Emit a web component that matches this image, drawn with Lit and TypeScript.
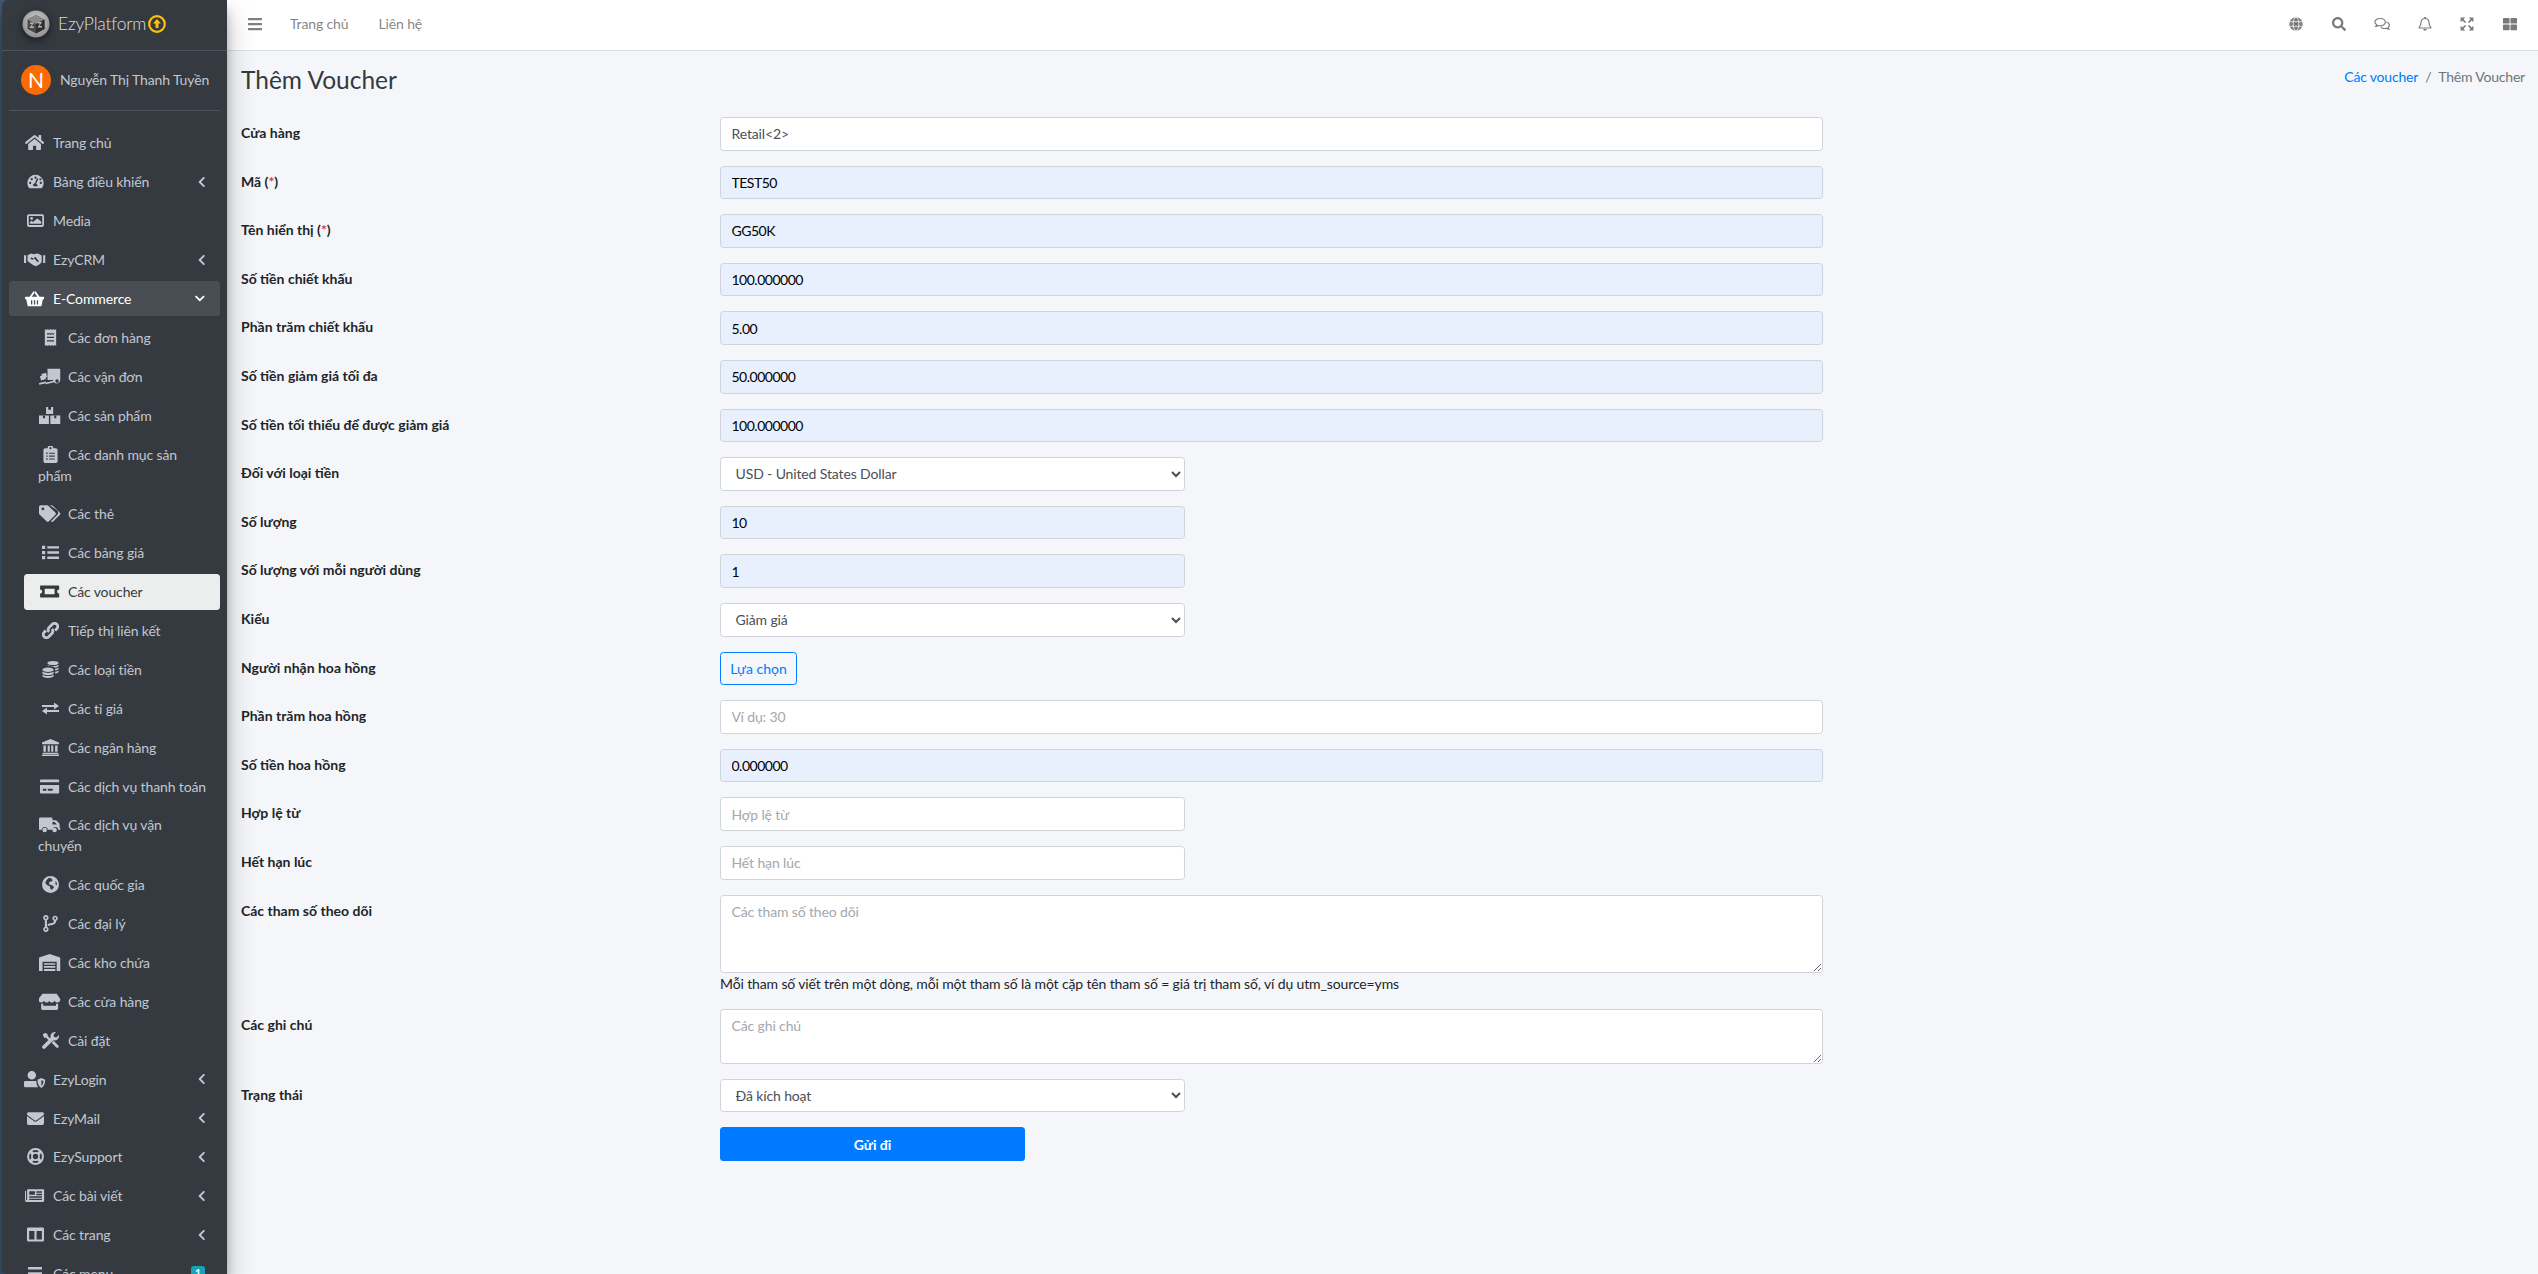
import { LitElement, html, svg, css, nothing } from 'lit';
import { customElement } from 'lit/decorators.js';

// icon table: [viewBox width, viewBox height, markup]
const ICONS: Record<string, [number, number, unknown]> = {
    home: [576, 512, svg`<path d="M280.37 148.26L96 300.11V464a16 16 0 0 0 16 16l112.06-.29a16 16 0 0 0 15.92-16V368a16 16 0 0 1 16-16h64a16 16 0 0 1 16 16v95.64a16 16 0 0 0 16 16.05L464 480a16 16 0 0 0 16-16V300L295.67 148.26a12.19 12.19 0 0 0-15.3 0zM571.6 251.47L488 182.56V44.05a12 12 0 0 0-12-12h-56a12 12 0 0 0-12 12v72.61L318.47 43a48 48 0 0 0-61 0L4.34 251.47a12 12 0 0 0-1.6 16.9l25.5 31A12 12 0 0 0 45.15 301l235.22-193.74a12.19 12.19 0 0 1 15.3 0L530.9 301a12 12 0 0 0 16.9-1.6l25.5-31a12 12 0 0 0-1.7-16.93z"/>`],
    gauge: [24, 24, svg`<path fill-rule="evenodd" d="M12 2.500A11.500 11.500 0 0 0 .5 14c0 2.600.9 5 2.300 6.900.4.500 1 .7 1.600.7h15.200c.6 0 1.200-.2 1.600-.7A11.400 11.400 0 0 0 23.500 14 11.500 11.500 0 0 0 12 2.500zM12 5a1.600 1.600 0 1 1 0 3.200A1.600 1.600 0 0 1 12 5zM4.500 15.600a1.600 1.600 0 1 1 0-3.200 1.600 1.600 0 0 1 0 3.200zm2.200-5.300a1.600 1.600 0 1 1 0-3.200 1.600 1.600 0 0 1 0 3.200zm8.100 8.300h-5.600a3 3 0 0 1 1.900-4.300l2.800-6.400a1 1 0 0 1 1.800.8l-2.700 6.300a3 3 0 0 1 1.800 3.600zm2.500-9.700a1.600 1.600 0 1 1 3.200 0 1.600 1.600 0 0 1-3.200 0zm2.200 6.700a1.600 1.600 0 1 1 0-3.200 1.600 1.600 0 0 1 0 3.200z"/>`],
    image: [24, 24, svg`<path fill-rule="evenodd" d="M2.500 3h19A2.500 2.500 0 0 1 24 5.500v13a2.500 2.500 0 0 1-2.500 2.500h-19A2.500 2.500 0 0 1 0 18.500v-13A2.500 2.500 0 0 1 2.500 3zM2.500 5.500v13h19v-13zM6.500 7a2 2 0 1 1 0 4 2 2 0 0 1 0-4zM4 16.500v-2l2.500-2 2 1.500 6-5 5.500 4.500v3z"/>`],
    handshake: [30, 24, svg`<path fill-rule="evenodd" d="M0 6h3v11H0zM27 6h3v11h-3zM5 6l5-2.500 4 1 2-.5 3.500-.5L25 6.500V16l-3.500 3-4.500 2.500-3-1-4-2.500L5 14zM10 9l3.500 1.500L16 8l5 6.500-1.500 1.500-5-5.500-2.500 2-3-1.500z"/>`],
    basket: [27, 24, svg`<path fill-rule="evenodd" d="M26 9.500h-5.400L15.200 2.100a1.300 1.300 0 0 0-2.100 1.500L17.400 9.500H9.600l4.300-5.900a1.300 1.300 0 0 0-2.100-1.500L6.400 9.500H1a1 1 0 0 0-1 1v1.500a1 1 0 0 0 1 1h.7l1.900 8.800A1.800 1.800 0 0 0 5.300 23h16.400a1.800 1.800 0 0 0 1.700-1.200L25.300 13h.7a1 1 0 0 0 1-1v-1.500a1 1 0 0 0-1-1zM8.500 14.500h1.800v6H8.500zM12.600 14.500h1.800v6h-1.800zM16.700 14.500h1.800v6h-1.800z"/>`],
    receipt: [24, 24, svg`<path fill-rule="evenodd" d="M4 0l2 1.500L8 0l2 1.500L12 0l2 1.500L16 0l2 1.500L20 0v24l-2-1.500-2 1.500-2-1.500-2 1.500-2-1.500L8 24l-2-1.500L4 24zM7 6v1.800h10V6zM7 11v1.800h10V11zM7 16v1.800h10V16z"/>`],
    dolly: [30, 24, svg`<path d="M12 1h17a1 1 0 0 1 1 1v15.500a5 5 0 0 1-8.800 2.500L10 23 9.400 20.900 20.300 18l-.3-1-8-.1zM25.500 16a2.500 2.500 0 1 0 0 5 2.500 2.500 0 0 0 0-5z"/><path d="M1.300 11.500l7-1.900 1.600 6-7 1.900zM3.300 8.500l6.500-1.800 1.700 6-6.500 1.800z"/><rect x="0" y="20" width="10" height="2.500" transform="rotate(-12 5 21)"/>`],
    boxes: [30, 24, svg`<path d="M10 0h10v10H10zM0 12h14v12H0zM16 12h14v12H16z"/><path fill="var(--hole)" d="M5.500 12h3v4h-3zM21.500 12h3v4h-3zM13 0h4v4h-4z"/>`],
    clipboard: [24, 24, svg`<path fill-rule="evenodd" d="M19.500 3H16a4 4 0 0 0-8 0H4.500A2.500 2.500 0 0 0 2 5.500v16A2.500 2.500 0 0 0 4.500 24h15a2.500 2.500 0 0 0 2.500-2.500v-16A2.500 2.500 0 0 0 19.500 3zM12 1.500a1.500 1.500 0 1 1 0 3 1.500 1.500 0 0 1 0-3zM6 9.300h2v2H6zM10 9.500h8v1.600h-8zM6 13.300h2v2H6zM10 13.500h8v1.600h-8zM6 17.300h2v2H6zM10 17.500h8v1.600h-8z"/>`],
    tags: [30, 24, svg`<path fill-rule="evenodd" d="M0 2.500A2.300 2.300 0 0 1 2.300.2h9.200c.6 0 1.200.3 1.700.7l9.800 9.800a2.300 2.300 0 0 1 0 3.300l-9 9a2.300 2.300 0 0 1-3.300 0L.7 13.300A2.300 2.300 0 0 1 0 11.700zM5.500 3.500a2 2 0 1 0 0 4 2 2 0 0 0 0-4z"/><path d="M15.500.2h2.300c.6 0 1.200.3 1.700.7l9.800 9.800a2.300 2.300 0 0 1 0 3.300l-9 9a2.300 2.300 0 0 1-3.300 0l-.2-.2 8.800-8.800a4.600 4.600 0 0 0 0-6.500z"/>`],
    list: [24, 24, svg`<path d="M0 2.500h4.500v4.500H0zM0 9.800h4.500v4.500H0zM0 17h4.500v4.500H0zM7.500 3h16.500v3.300H7.500zM7.500 10.400h16.500v3.300H7.500zM7.500 17.700h16.500v3.300H7.500z"/>`],
    ticket: [30, 24, svg`<path fill-rule="evenodd" d="M2.500 3.500h25a1 1 0 0 1 1 1v4.500a3 3 0 0 0 0 6v4.500a1 1 0 0 1-1 1h-25a1 1 0 0 1-1-1V15a3 3 0 0 0 0-6V4.500a1 1 0 0 1 1-1zM8 8v8h14V8z"/>`],
    link: [24, 24, svg`<path fill="none" stroke="currentColor" stroke-width="4" d="M10 14a4.500 4.500 0 0 1 0-6.400l4.500-4.500a4.500 4.500 0 0 1 6.400 6.400l-2.400 2.400M14 10a4.500 4.500 0 0 1 0 6.400l-4.500 4.500a4.500 4.500 0 0 1-6.400-6.400l2.400-2.400"/>`],
    coins: [24, 24, svg`<path d="M8.500 9c4.500 0 8 1.500 8 3.300S13 15.500 8.500 15.500s-8-1.400-8-3.200S4 9 8.500 9zM.5 14.800c1.800 1.400 4.700 2 8 2s6.200-.6 8-2v2c0 1.800-3.500 3.200-8 3.200s-8-1.400-8-3.200zM.5 19.300c1.800 1.300 4.700 1.900 8 1.900s6.200-.6 8-1.900v1.500c0 1.800-3.500 3.200-8 3.200s-8-1.400-8-3.200zM15.500 0c4.500 0 8 1.300 8 2.800s-3.500 2.900-8 2.900-8-1.400-8-2.900S11 0 15.500 0zM7.500 5.200c1.800 1.100 4.700 1.700 8 1.700s6.200-.6 8-1.700v1.500c0 1.200-2.100 2.200-5.300 2.700-1.500-1.300-3.900-2-7-2.300-2.600-.2-3.700-1-3.700-1.900zM18.500 11c2.300-.3 4-1 5-1.800V11c0 1-1.700 2-5 2.500zM18.500 15.200c2.300-.3 4-1 5-1.800v1.800c0 1-1.700 2-5 2.500z"/>`],
    exchange: [24, 24, svg`<path d="M0 7h17V3.500l7 5-7 5V10H0zM24 14v3H7v3.500l-7-5 7-5V14z"/>`],
    bank: [24, 24, svg`<path d="M12 0l12 5v2.500H0V5zM2 9h3.500v9H2zM8 9h3v9H8zM13 9h3v9h-3zM18.500 9H22v9h-3.500zM1 19.500h22V21H1zM0 22h24v2H0z"/>`],
    card: [27, 24, svg`<path fill-rule="evenodd" d="M0 3.500A1.500 1.500 0 0 1 1.500 2h24A1.500 1.500 0 0 1 27 3.500V6H0zM0 10h27v10.500a1.500 1.500 0 0 1-1.500 1.500h-24A1.500 1.500 0 0 1 0 20.500zM4 15v3h5v-3zM11 15v3h7v-3z"/>`],
    truck: [30, 24, svg`<path fill-rule="evenodd" d="M2 2h15a2 2 0 0 1 2 2v2h4.500c.5 0 1 .2 1.400.6l3.600 3.600c.4.4.6.900.6 1.400V17h1v2.500h-3a4 4 0 0 0-8 0h-7a4 4 0 0 0-8 0H0V4a2 2 0 0 1 2-2zM19 8.500V12h6.500l-3.500-3.500zM8 16.500a3.200 3.200 0 1 1 0 6.400 3.200 3.200 0 0 1 0-6.400zM22 16.500a3.200 3.200 0 1 1 0 6.400 3.200 3.200 0 0 1 0-6.400z"/>`],
    globeAfrica: [24, 24, svg`<path fill-rule="evenodd" d="M12 0a12 12 0 1 0 0 24 12 12 0 0 0 0-24zM10 2.500l3 1 2 2-1 2-3 .5-1.500 2 1.500 2.500 4 1 2 2.500-3 3.500-2-1-1-4-3.500-1.500-3-3 2-4.500zM19 7l2 3v3l-2-1.500z"/>`],
    branch: [24, 24, svg`<path fill-rule="evenodd" d="M5.500 0a3.800 3.800 0 0 1 1.500 7.300v9.400a3.800 3.800 0 1 1-3 0V7.300A3.800 3.800 0 0 1 5.500 0zM5.500 2.300a1.500 1.500 0 1 0 0 3 1.500 1.500 0 0 0 0-3zM5.500 18.700a1.500 1.500 0 1 0 0 3 1.500 1.500 0 0 0 0-3zM18.500 1a3.800 3.800 0 0 1 1.500 7.300c-.3 4.500-4.500 5.500-8 6.200-1.500.3-3.500.8-4 1.500v-3c1.800-1 3.200-1.200 5-1.600 2.500-.5 3.800-1 4-3.100A3.800 3.800 0 0 1 18.500 1zM18.500 3.300a1.500 1.500 0 1 0 0 3 1.500 1.500 0 0 0 0-3z"/>`],
    warehouse: [30, 24, svg`<path fill-rule="evenodd" d="M15 0l14 4.500c.6.200 1 .8 1 1.500v18h-5V11H5v13H0V6c0-.7.4-1.300 1-1.500zM7 13h16v2.300H7zM7 17h16v2.300H7zM7 21h16v3H7z"/>`],
    store: [30, 24, svg`<path fill-rule="evenodd" d="M5 1h20l5 7.500c.4 2.800-1.500 5-4 5-1.800 0-3.300-1-4-2.500-.7 1.500-2.200 2.500-4 2.500s-3.200-1-3.500-2.500c-.5 1.500-2 2.500-3.500 2.500-1.800 0-3.300-1-4-2.500-.7 1.500-2.200 2.500-4 2.500-2.500 0-4.400-2.200-4-5zM3 15h3v3h18v-3h3v7a2 2 0 0 1-2 2H5a2 2 0 0 1-2-2z"/>`],
    tools: [24, 24, svg`<path d="M23 19.200l-6.700-6.700-2.700 2.700 6.700 6.700a1.900 1.900 0 0 0 2.700 0A1.900 1.900 0 0 0 23 19.200zM4.500 1L1 3.500 3 8h2.800l5.300 5.300 2.300-2.300L8 5.700V3zM18 0a6 6 0 0 0-5.700 8L1 19.300A2.500 2.500 0 0 0 4.700 23L16 11.700a6 6 0 0 0 7.700-7.300l-3.400 3.400-3.300-.7-.7-3.300L19.700.4A6 6 0 0 0 18 0z"/>`],
    userShield: [30, 24, svg`<path fill-rule="evenodd" d="M11 0a6 6 0 1 1 0 12 6 6 0 0 1 0-12zM2.500 14H16c.600 0 1 .100 1.500.300l.500 5.200 2 3-.5.500H2a2 2 0 0 1-2-2v-4a2.500 2.500 0 0 1 2.500-3zM24.500 10l5.500 2.300c0 5-1.500 9-5.500 11.700-4-2.700-5.500-6.700-5.500-11.700zM24.500 13v8.200c2-1.700 2.800-4.300 3-7z"/>`],
    envelope: [512, 512, svg`<path d="M502.3 190.8c3.900-3.100 9.700-.200 9.700 4.700V400c0 26.500-21.500 48-48 48H48c-26.500 0-48-21.500-48-48V195.600c0-5 5.700-7.800 9.700-4.700 22.400 17.400 52.100 39.500 154.100 113.600 21.100 15.400 56.700 47.800 92.200 47.600 35.700.300 72-32.800 92.300-47.600 102-74.100 131.600-96.300 154-113.700zM256 320c23.200.400 56.600-29.200 73.400-41.400 132.700-96.300 142.800-104.700 173.400-128.700 5.800-4.500 9.200-11.500 9.200-18.900v-19c0-26.500-21.500-48-48-48H48C21.500 64 0 85.500 0 112v19c0 7.400 3.400 14.300 9.200 18.900 30.600 23.900 40.700 32.400 173.400 128.700 16.800 12.200 50.200 41.800 73.400 41.400z"/>`],
    lifeRing: [24, 24, svg`<g fill="none" stroke="currentColor"><circle cx="12" cy="12" r="10.500" stroke-width="2.800"/><circle cx="12" cy="12" r="5" stroke-width="2.500"/><path stroke-width="4.500" d="M4 4l4.500 4.500M20 4l-4.500 4.500M4 20l4.500-4.500M20 20l-4.500-4.500"/></g>`],
    newspaper: [27, 24, svg`<path fill-rule="evenodd" d="M3 3h22.500A1.500 1.500 0 0 1 27 4.500v15a1.500 1.500 0 0 1-1.500 1.500H2a2 2 0 0 1-2-2V5.500h1.500V18a.7.7 0 0 0 1.500 0zM6 6v5h8V6zM16 6v2h8V6zM16 9.500v2h8v-2zM6 13v2h18v-2zM6 16.500v2h18v-2z"/>`],
    columns: [24, 24, svg`<path fill-rule="evenodd" d="M2 2h20a2 2 0 0 1 2 2v16a2 2 0 0 1-2 2H2a2 2 0 0 1-2-2V4a2 2 0 0 1 2-2zM3 7v12h7.500V7zM13.500 7v12H21V7z"/>`],
    bars: [448, 512, svg`<path d="M16 132h416c8.837 0 16-7.163 16-16V76c0-8.837-7.163-16-16-16H16C7.163 60 0 67.163 0 76v40c0 8.837 7.163 16 16 16zm0 160h416c8.837 0 16-7.163 16-16v-40c0-8.837-7.163-16-16-16H16c-8.837 0-16 7.163-16 16v40c0 8.837 7.163 16 16 16zm0 160h416c8.837 0 16-7.163 16-16v-40c0-8.837-7.163-16-16-16H16c-8.837 0-16 7.163-16 16v40c0 8.837 7.163 16 16 16z"/>`],
    chevLeft: [320, 512, svg`<path d="M34.520 239.030L228.870 44.690c9.370-9.370 24.570-9.370 33.940 0l22.670 22.670c9.360 9.360 9.370 24.520.040 33.900L131.490 256l154.020 154.750c9.340 9.380 9.320 24.540-.040 33.900l-22.670 22.670c-9.370 9.370-24.570 9.370-33.940 0L34.520 272.970c-9.370-9.370-9.370-24.570 0-33.940z"/>`],
    chevDown: [448, 512, svg`<path d="M207.029 381.476L12.686 187.132c-9.373-9.373-9.373-24.569 0-33.941l22.667-22.667c9.357-9.357 24.522-9.375 33.901-.04L224 284.505l154.745-154.021c9.379-9.335 24.544-9.317 33.901.04l22.667 22.667c9.373 9.373 9.373 24.569 0 33.941L240.971 381.476c-9.373 9.372-24.569 9.372-33.942 0z"/>`],
    globe: [24, 24, svg`<circle cx="12" cy="12" r="11.500"/><g fill="none" stroke="#fff" stroke-width="1.300"><ellipse cx="12" cy="12" rx="5" ry="11.500"/><path d="M1.500 8h21M1.500 16h21"/></g>`],
    search: [512, 512, svg`<path d="M505 442.700L405.300 343c-4.500-4.500-10.600-7-17-7H372c27.600-35.300 44-79.700 44-128C416 93.100 322.900 0 208 0S0 93.100 0 208s93.100 208 208 208c48.300 0 92.700-16.400 128-44v16.300c0 6.400 2.500 12.500 7 17l99.700 99.700c9.400 9.400 24.600 9.400 33.900 0l28.300-28.300c9.400-9.400 9.400-24.600.100-34zM208 336c-70.700 0-128-57.200-128-128 0-70.700 57.200-128 128-128 70.700 0 128 57.200 128 128 0 70.700-57.200 128-128 128z"/>`],
    comments: [28, 24, svg`<g fill="none" stroke="currentColor" stroke-width="2"><path d="M10.500 2.500c5 0 9 2.800 9 6.200s-4 6.300-9 6.300c-1 0-2-.1-3-.4-1.200.9-3 1.600-4.500 1.600.8-.9 1.400-2 1.500-3C2.600 11.900 1.500 10.400 1.500 8.700c0-3.400 4-6.200 9-6.200z"/><path d="M21.500 8.500c2.900.9 5 2.900 5 5.300 0 1.600-.9 3-2.300 4.100.1 1 .7 2.100 1.500 3-1.500 0-3.300-.7-4.500-1.600-1 .3-2 .4-3 .4-2.800 0-5.300-1-6.700-2.500"/></g>`],
    bell: [24, 24, svg`<g fill="none" stroke="currentColor" stroke-width="2"><path d="M12 2.500c-4 0-6.800 3-6.800 6.800 0 5-1.700 7-3.200 8.700-.2.300 0 .8.400.8h19.200c.4 0 .6-.5.400-.8-1.500-1.700-3.200-3.700-3.200-8.700 0-3.800-2.800-6.800-6.800-6.800z"/></g><path d="M10.500 0h3v3h-3zM9 20.500h6a3 3 0 0 1-6 0z"/>`],
    expand: [24, 24, svg`<path d="M1 1h8L1 9zM23 1v8l-8-8zM1 23v-8l8 8zM23 23h-8l8-8z"/><path fill="none" stroke="currentColor" stroke-width="2.800" d="M4 4l5.500 5.500M20 4l-5.500 5.500M4 20l5.500-5.500M20 20l-5.500-5.500"/>`],
    thLarge: [512, 512, svg`<path d="M296 32h192c13.255 0 24 10.745 24 24v160c0 13.255-10.745 24-24 24H296c-13.255 0-24-10.745-24-24V56c0-13.255 10.745-24 24-24zm-80 0H24C10.745 32 0 42.745 0 56v160c0 13.255 10.745 24 24 24h192c13.255 0 24-10.745 24-24V56c0-13.255-10.745-24-24-24zM0 296v160c0 13.255 10.745 24 24 24h192c13.255 0 24-10.745 24-24V296c0-13.255-10.745-24-24-24H24c-13.255 0-24 10.745-24 24zm296 184h192c13.255 0 24-10.745 24-24V296c0-13.255-10.745-24-24-24H296c-13.255 0-24 10.745-24 24v160c0 13.255 10.745 24 24 24z"/>`],
};

function icon(name: string, height = 17) {
    const [w, h, body] = ICONS[name];
    return html`<svg class="ico" viewBox="0 0 ${w} ${h}" width=${(w / h) * height} height=${height} fill="currentColor">${body}</svg>`;
}

type NavItem = { icon: string; label: string; arrow?: 'left' | 'down'; active?: boolean; badge?: string };

const TOP_BEFORE: NavItem[] = [
    { icon: 'home', label: 'Trang chủ' },
    { icon: 'gauge', label: 'Bảng điều khiển', arrow: 'left' },
    { icon: 'image', label: 'Media' },
    { icon: 'handshake', label: 'EzyCRM', arrow: 'left' },
    { icon: 'basket', label: 'E-Commerce', arrow: 'down', active: true },
];

const SUB: NavItem[] = [
    { icon: 'receipt', label: 'Các đơn hàng' },
    { icon: 'dolly', label: 'Các vận đơn' },
    { icon: 'boxes', label: 'Các sản phẩm' },
    { icon: 'clipboard', label: 'Các danh mục sản\nphẩm' },
    { icon: 'tags', label: 'Các thẻ' },
    { icon: 'list', label: 'Các bảng giá' },
    { icon: 'ticket', label: 'Các voucher', active: true },
    { icon: 'link', label: 'Tiếp thị liên kết' },
    { icon: 'coins', label: 'Các loại tiền' },
    { icon: 'exchange', label: 'Các tỉ giá' },
    { icon: 'bank', label: 'Các ngân hàng' },
    { icon: 'card', label: 'Các dịch vụ thanh toán' },
    { icon: 'truck', label: 'Các dịch vụ vận\nchuyển' },
    { icon: 'globeAfrica', label: 'Các quốc gia' },
    { icon: 'branch', label: 'Các đại lý' },
    { icon: 'warehouse', label: 'Các kho chứa' },
    { icon: 'store', label: 'Các cửa hàng' },
    { icon: 'tools', label: 'Cài đặt' },
];

const TOP_AFTER: NavItem[] = [
    { icon: 'userShield', label: 'EzyLogin', arrow: 'left' },
    { icon: 'envelope', label: 'EzyMail', arrow: 'left' },
    { icon: 'lifeRing', label: 'EzySupport', arrow: 'left' },
    { icon: 'newspaper', label: 'Các bài viết', arrow: 'left' },
    { icon: 'columns', label: 'Các trang', arrow: 'left' },
    { icon: 'bars', label: 'Các menu', badge: '1' },
];

type Field = {
    label: string;
    required?: boolean;
    kind: 'input' | 'select' | 'button' | 'textarea';
    value?: string;
    placeholder?: string;
    half?: boolean;
    filled?: boolean;
    rows?: string;
    help?: string;
};

const FIELDS: Field[] = [
    { label: 'Cửa hàng', kind: 'input', value: 'Retail<2>' },
    { label: 'Mã', required: true, kind: 'input', value: 'TEST50', filled: true },
    { label: 'Tên hiển thị', required: true, kind: 'input', value: 'GG50K', filled: true },
    { label: 'Số tiền chiết khấu', kind: 'input', value: '100.000000', filled: true },
    { label: 'Phần trăm chiết khấu', kind: 'input', value: '5.00', filled: true },
    { label: 'Số tiền giảm giá tối đa', kind: 'input', value: '50.000000', filled: true },
    { label: 'Số tiền tối thiểu để được giảm giá', kind: 'input', value: '100.000000', filled: true },
    { label: 'Đối với loại tiền', kind: 'select', value: 'USD - United States Dollar', half: true },
    { label: 'Số lượng', kind: 'input', value: '10', filled: true, half: true },
    { label: 'Số lượng với mỗi người dùng', kind: 'input', value: '1', filled: true, half: true },
    { label: 'Kiểu', kind: 'select', value: 'Giảm giá', half: true },
    { label: 'Người nhận hoa hồng', kind: 'button', value: 'Lựa chọn' },
    { label: 'Phần trăm hoa hồng', kind: 'input', placeholder: 'Ví dụ: 30' },
    { label: 'Số tiền hoa hồng', kind: 'input', value: '0.000000', filled: true },
    { label: 'Hợp lệ từ', kind: 'input', placeholder: 'Hợp lệ từ', half: true },
    { label: 'Hết hạn lúc', kind: 'input', placeholder: 'Hết hạn lúc', half: true },
    {
        label: 'Các tham số theo dõi',
        kind: 'textarea',
        placeholder: 'Các tham số theo dõi',
        rows: 'tall',
        help: 'Mỗi tham số viết trên một dòng, mỗi một tham số là một cặp tên tham số = giá trị tham số, ví dụ utm_source=yms',
    },
    { label: 'Các ghi chú', kind: 'textarea', placeholder: 'Các ghi chú', rows: 'short' },
    { label: 'Trạng thái', kind: 'select', value: 'Đã kích hoạt', half: true },
];

@customElement('app-root')
export class AppRoot extends LitElement {
    static styles = css`
        :host {
            display: flex;
            height: 100vh;
            overflow: hidden;
            background: #3f5871;
            font-family: "Lato", "Noto Sans", "Liberation Sans", sans-serif;
            font-size: 14px;
            line-height: 21px;
            letter-spacing: -0.13px;
            color: #212529;
            --hole: #343a40;
        }

        * {
            box-sizing: border-box;
        }

        a {
            text-decoration: none;
            color: inherit;
        }

        .sidebar {
            flex: 0 0 225px;
            margin-left: 2px;
            background: #343a40;
            color: #c2c7d0;
            border-radius: 6px 0 0 6px;
            box-shadow: 0 14px 28px rgba(0, 0, 0, .25), 0 10px 10px rgba(0, 0, 0, .22);
            overflow: hidden;
            z-index: 2;
        }

        .brand {
            display: flex;
            align-items: center;
            height: 51px;
            padding: 0 0 3px 20px;
            border-bottom: 1px solid #4b545c;
            font-size: 17.500px;
            font-weight: 300;
            letter-spacing: -0.2px;
            color: rgba(255, 255, 255, .85);
        }

        .logo {
            width: 28px;
            height: 28px;
            margin-right: 8px;
            filter: drop-shadow(0 3px 4px rgba(0, 0, 0, .5));
        }

        .upgrade {
            margin-left: 2px;
        }

        .user {
            display: flex;
            align-items: center;
            height: 60px;
            margin: 0 7px;
            padding: 0 0 2px 12px;
            border-bottom: 1px solid #4b545c;
        }

        .avatar {
            width: 30px;
            height: 30px;
            margin-right: 9px;
            border-radius: 50%;
            background: #fa6b05;
            color: #fff;
            font-size: 21px;
            line-height: 30px;
            text-align: center;
        }

        .nav {
            padding: 14px 7px 0;
        }

        .item {
            display: flex;
            align-items: center;
            height: 35.900px;
            margin-bottom: 3px;
            padding: 0 15px 0 16px;
            border-radius: 3.500px;
        }

        .item.active {
            background: rgba(255, 255, 255, .1);
            color: #fff;
        }

        .item .slot {
            display: flex;
            justify-content: center;
            flex: 0 0 24px;
            margin: 0 6px 0 -2px;
        }

        .item .end {
            margin-left: auto;
            display: flex;
        }

        .badge {
            margin-left: auto;
            width: 14px;
            height: 15px;
            border-radius: 3px;
            background: #17a2b8;
            color: #fff;
            font-size: 10.500px;
            font-weight: 700;
            line-height: 15px;
            text-align: center;
        }

        .sub {
            display: block;
            margin: 0 0 3px 15px;
            padding: 7.450px 0 7.450px 14px;
            border-radius: 3.500px;
            line-height: 21px;
            white-space: pre;
        }

        .sub.active {
            background: #eceeed;
            color: #343a40;
        }

        .sub .slot {
            display: inline-flex;
            justify-content: center;
            width: 24px;
            margin-right: 6px;
            vertical-align: -3px;
        }

        .main {
            flex: 1;
            min-width: 0;
            background: #f4f6f9;
        }

        .topbar {
            display: flex;
            align-items: center;
            height: 51px;
            padding: 0 6.500px 3px 21px;
            background: #fff;
            border-bottom: 1px solid #dee2e6;
            color: rgba(0, 0, 0, .5);
        }

        .topbar .links {
            display: flex;
            gap: 30px;
            margin-left: 28px;
        }

        .topbar .tools {
            display: flex;
            align-items: center;
            margin-left: auto;
            color: #7a7a7a;
        }

        .topbar .tools span {
            display: flex;
            justify-content: center;
            width: 42.800px;
        }

        .head {
            display: flex;
            justify-content: space-between;
            padding: 12px 13px 20px 14px;
        }

        h1 {
            margin: 0;
            font-size: 24.500px;
            font-weight: 400;
            line-height: 34px;
            letter-spacing: 0;
            color: #343a40;
        }

        .crumbs {
            display: flex;
            gap: 7px;
            padding-top: 3px;
            letter-spacing: -0.2px;
            color: #6c757d;
        }

        .crumbs a {
            color: #007bff;
        }

        form {
            padding-left: 14px;
        }

        .row {
            display: grid;
            grid-template-columns: 479px 1103px;
            margin-bottom: 15px;
        }

        label {
            padding-top: 5px;
            font-weight: 700;
            letter-spacing: 0;
        }

        .req {
            color: #dc3545;
        }

        .ctl {
            display: block;
            width: 100%;
            height: 33.600px;
            padding: 5.250px 10.500px;
            border: 1px solid #ced4da;
            border-radius: 3.500px;
            background: #fff;
            color: #495057;
            font: inherit;
            letter-spacing: -0.13px;
            outline: none;
        }

        .ctl::placeholder {
            color: #a3a8ad;
        }

        .ctl.half {
            width: 465px;
        }

        .ctl.filled {
            background: #e8f0fe;
            color: #000;
            letter-spacing: -0.5px;
        }

        textarea.ctl.tall {
            height: 78px;
        }

        textarea.ctl.short {
            height: 55px;
        }

        .help {
            display: block;
            line-height: 21px;
        }

        .btn-outline {
            display: block;
            width: 77px;
            height: 33.600px;
            padding: 0;
            border: 1px solid #007bff;
            border-radius: 3.500px;
            background: transparent;
            color: #007bff;
            font: inherit;
        }

        .btn-submit {
            display: block;
            width: 305px;
            height: 34px;
            margin-left: 479px;
            border: 0;
            border-radius: 3.500px;
            background: #007bff;
            color: #fff;
            font: inherit;
            font-weight: 700;
        }
    `;

    private renderTop(item: NavItem) {
        return html`<a class="item ${item.active ? 'active' : ''}">
            <span class="slot">${icon(item.icon)}</span>${item.label}
            ${item.arrow === 'left' ? html`<span class="end">${icon('chevLeft', 12)}</span>` : nothing}
            ${item.arrow === 'down' ? html`<span class="end">${icon('chevDown', 11)}</span>` : nothing}
            ${item.badge ? html`<span class="badge">${item.badge}</span>` : nothing}
        </a>`;
    }

    private renderSub(item: NavItem) {
        return html`<a class="sub ${item.active ? 'active' : ''}"><span class="slot">${icon(item.icon)}</span>${item.label}</a>`;
    }

    private renderControl(f: Field) {
        const cls = `ctl ${f.half ? 'half' : ''} ${f.filled ? 'filled' : ''} ${f.rows ?? ''}`;
        switch (f.kind) {
            case 'select':
                return html`<select class=${cls}><option>${f.value}</option></select>`;
            case 'button':
                return html`<button type="button" class="btn-outline">${f.value}</button>`;
            case 'textarea':
                return html`<div>
                    <textarea class=${cls} placeholder=${f.placeholder ?? ''}></textarea>
                    ${f.help ? html`<span class="help">${f.help}</span>` : nothing}
                </div>`;
            default:
                return html`<input class=${cls} .value=${f.value ?? ''} placeholder=${f.placeholder ?? ''} />`;
        }
    }

    render() {
        return html`
            <aside class="sidebar">
                <div class="brand">
                    <svg class="logo" viewBox="0 0 28 28">
                        <defs>
                            <radialGradient id="lg" cx="50%" cy="40%" r="60%">
                                <stop offset="0" stop-color="#d6d6d6" />
                                <stop offset="1" stop-color="#8f8f8f" />
                            </radialGradient>
                        </defs>
                        <circle cx="14" cy="14" r="13.500" fill="url(#lg)" />
                        <path d="M14 5l8.500 4.500v9.500L14 23.500 5.500 19V9.500z" fill="#4a4a4a" />
                        <path d="M14 5l8.500 4.500L14 14 5.500 9.500z" fill="#8a8a8a" />
                        <path d="M14 14l8.500-4.500v9.500L14 23.500z" fill="#2f2f2f" />
                        <path d="M8 12.500h4l-2.500 4H12v1.500H7.500l2.500-4H8zM16 12h4l-2.500 4H20v1.500h-4.500l2.500-4h-2z" fill="#b5b5b5" />
                    </svg>
                    EzyPlatform
                    <svg class="upgrade" viewBox="0 0 18 18" width="18" height="18">
                        <circle cx="9" cy="9" r="7.800" fill="none" stroke="#ffc107" stroke-width="2.200" />
                        <path d="M9 4l4 4.500h-2.500V13h-3V8.500H5z" fill="#ffc107" />
                    </svg>
                </div>
                <div class="user">
                    <div class="avatar">N</div>
                    Nguyễn Thị Thanh Tuyền
                </div>
                <nav class="nav">
                    ${TOP_BEFORE.map((i) => this.renderTop(i))}
                    ${SUB.map((i) => this.renderSub(i))}
                    ${TOP_AFTER.map((i) => this.renderTop(i))}
                </nav>
            </aside>
            <div class="main">
                <header class="topbar">
                    ${icon('bars', 16)}
                    <div class="links"><a>Trang chủ</a><a>Liên hệ</a></div>
                    <div class="tools">
                        <span>${icon('globe', 14)}</span>
                        <span>${icon('search', 14)}</span>
                        <span>${icon('comments', 14)}</span>
                        <span>${icon('bell', 14)}</span>
                        <span>${icon('expand', 14)}</span>
                        <span>${icon('thLarge', 14)}</span>
                    </div>
                </header>
                <div class="head">
                    <h1>Thêm Voucher</h1>
                    <div class="crumbs"><a>Các voucher</a><span>/</span><span>Thêm Voucher</span></div>
                </div>
                <form>
                    ${FIELDS.map(
                        (f) => html`<div class="row">
                            <label>${f.label}${f.required ? html` (<span class="req">*</span>)` : nothing}</label>
                            ${this.renderControl(f)}
                        </div>`
                    )}
                    <button type="button" class="btn-submit">Gửi đi</button>
                </form>
            </div>
        `;
    }
}
